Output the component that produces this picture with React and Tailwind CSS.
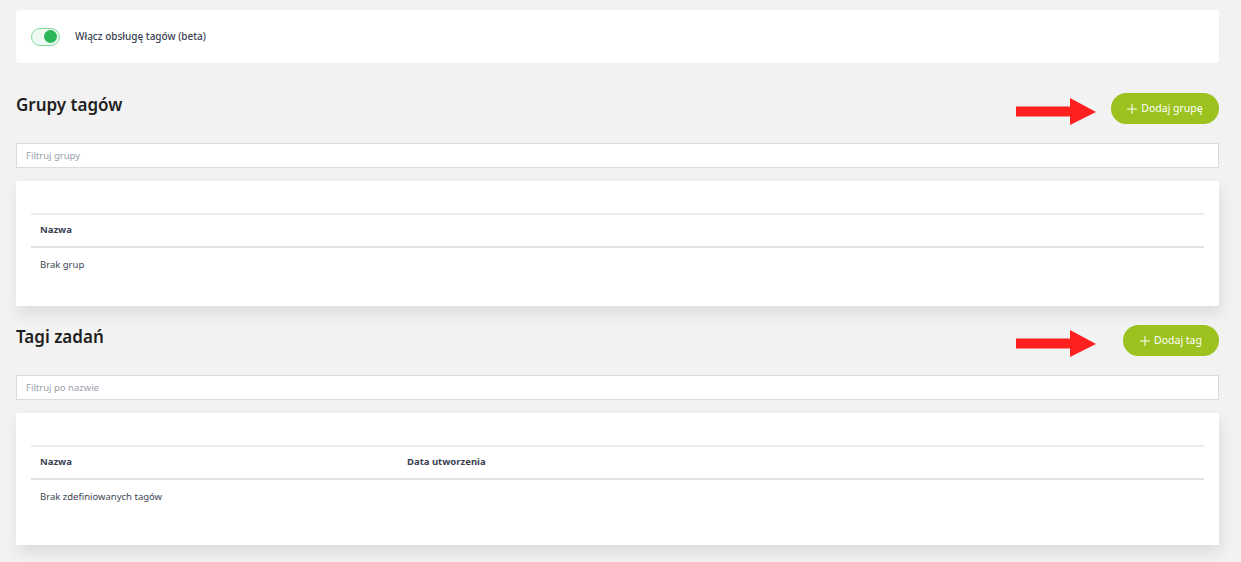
import React, { useState } from "react";

const Arrow = () => (
	<svg width="80" height="28" viewBox="0 0 80 28" className="shrink-0">
		<rect x="0" y="8.5" width="56" height="10" fill="#fe1f1f" />
		<polygon points="54,0 80,14 54,27" fill="#fe1f1f" />
	</svg>
);

const AddButton = ({ label, width }) => (
	<button
		className={`flex h-[31px] items-center justify-center gap-[4px] rounded-full bg-[#9bc21e] text-[10.5px] text-white ${width}`}>
		<svg width="10" height="10" viewBox="0 0 10 10">
			<path d="M5 0v10M0 5h10" stroke="white" strokeWidth="1" fill="none" />
		</svg>
		{label}
	</button>
);

const Section = ({ title, button, btnWidth, gap, filter, cols, empty, cardHeight }) => (
	<div>
		<div className="flex h-[31px] items-start justify-between">
			<h2 className="mt-[0px] text-[17px] font-semibold leading-6 text-[#1f1f1f]">{title}</h2>
			<div className={`flex h-[31px] items-start ${gap}`}>
				<div className="mt-[5px] h-[26px]">
					<Arrow />
				</div>
				<AddButton label={button} width={btnWidth} />
			</div>
		</div>
		<input
			placeholder={filter}
			className="mt-[19px] block h-[25px] w-full border border-[#dcdcdc] bg-white px-[9px] text-[9.5px] text-[#444] outline-none placeholder:text-[#9aa0a8]"
		/>
		<div className={`mt-[13px] bg-white px-[15px] pt-[32px] shadow-[2px_8px_14px_rgba(0,0,0,0.09)] ${cardHeight}`}>
			<div className="flex h-[35px] items-center border-t-2 border-b-2 border-t-[#ececec] border-b-[#e1e4e8] px-[9px] text-[9.5px] font-bold text-[#3a4252]">
				{cols.map((c, i) => (
					<div key={i} className={i === 0 ? "w-[367px]" : ""}>
						{c}
					</div>
				))}
			</div>
			<div className="px-[9px] pt-[10px] text-[9.5px] text-[#3d4555]">{empty}</div>
		</div>
	</div>
);

const App = () => {
	const [enabled, setEnabled] = useState(true);

	return (
		<div
			className="min-h-screen bg-[#f2f2f2] px-[16px] pt-[10px] pr-[22px]"
			style={{ fontFamily: '"Noto Sans", "Open Sans", sans-serif' }}>
			<div className="flex h-[53px] items-center gap-[15px] rounded-[4px] bg-white px-[15px]">
				<button
					onClick={() => setEnabled(!enabled)}
					className="flex h-[18px] w-[29px] items-center justify-end rounded-full border border-[#7fdc9c] bg-[#effaf2] px-[2px]">
					<span className="h-[13px] w-[13px] rounded-full bg-[#2bb65a]" />
				</button>
				<span className="text-[10px] font-medium text-[#3b4252]">Włącz obsługę tagów (beta)</span>
			</div>

			<div className="mt-[30px]">
				<Section
					title="Grupy tagów"
					button="Dodaj grupę"
					btnWidth="w-[108px]"
					gap="gap-[15px]"
					filter="Filtruj grupy"
					cols={["Nazwa"]}
					empty="Brak grup"
					cardHeight="h-[125px]"
				/>
			</div>

			<div className="mt-[19px]">
				<Section
					title="Tagi zadań"
					button="Dodaj tag"
					btnWidth="w-[96px]"
					gap="gap-[27px]"
					filter="Filtruj po nazwie"
					cols={["Nazwa", "Data utworzenia"]}
					empty="Brak zdefiniowanych tagów"
					cardHeight="h-[132px]"
				/>
			</div>
		</div>
	);
};

export default App;
